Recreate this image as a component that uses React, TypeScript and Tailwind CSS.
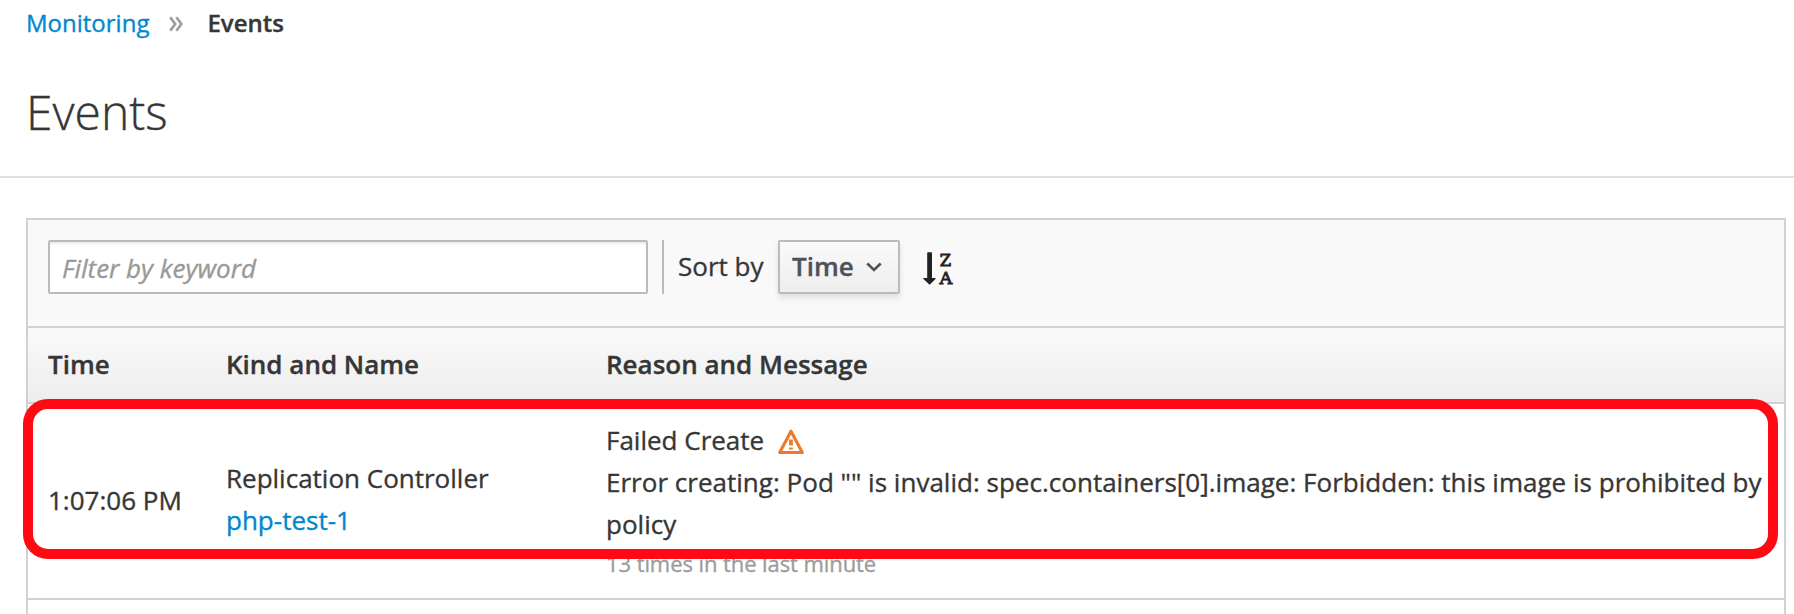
export default function App() {
  return (
    <div className="relative flex h-[614px] w-[1794px] flex-col overflow-hidden bg-white font-['Open_Sans',sans-serif] text-[26px] leading-[42px] text-[#363636] [-webkit-text-stroke:0.35px]">
      <header className="h-[178px] shrink-0 border-b-2 border-[#e1e1e1] pl-[26px] pt-[3px]">
        <nav className="flex items-center text-[24px] leading-[40px]">
          <a className="text-[#0088ce]">Monitoring</a>
          <svg className="ml-[20px] mr-[21px] mt-[2px] h-[16px] w-[14px]" viewBox="0 0 14 16" fill="none" stroke="#9c9c9c" strokeWidth="2.7">
            <path d="M1.2 1.2 6.2 8 1.2 14.8M7.4 1.2 12.4 8 7.4 14.8" />
          </svg>
          <span className="ml-[3px] font-semibold">Events</span>
        </nav>
        <h1 className="mt-[43px] text-[48px] font-light leading-[52px]">Events</h1>
      </header>

      <main className="ml-[26px] mt-[40px] flex h-[420px] w-[1760px] shrink-0 flex-col border-x-2 border-t-2 border-[#d1d1d1]">
        <div className="flex h-[108px] shrink-0 items-start border-b-2 border-[#d1d1d1] bg-[#f9f9f9] pl-[20px] pt-[20px]">
          <input
            className="h-[54px] w-[600px] rounded-[2px] border-2 border-[#bbb] bg-white px-[12px] pt-[2px] shadow-[inset_0_2px_2px_rgba(3,3,3,0.075)] outline-none placeholder:italic placeholder:text-[#999] placeholder:opacity-100"
            placeholder="Filter by keyword"
          />
          <div className="ml-[14px] h-[54px] w-[2px] bg-[#bbb]" />
          <span className="ml-[14px] w-[100px] pt-[5px]">Sort by</span>
          <button className="flex h-[54px] w-[122px] items-center rounded-[2px] border-2 border-[#bbb] bg-linear-to-b from-[#fafafa] to-[#ededed] pb-[2px] pl-[12px] font-semibold text-[#4d5258] shadow-[0_4px_6px_rgba(3,3,3,0.1)]">
            Time
            <svg className="ml-[12px] mt-[2px] h-[10px] w-[16px]" viewBox="0 0 16 10" fill="none" stroke="currentColor" strokeWidth="2.6">
              <path d="M1.3 1.5 8 8 14.7 1.5" />
            </svg>
          </button>
          <svg className="ml-[22px] mt-[10px] h-[40px] w-[40px] overflow-visible" viewBox="0 0 40 40" fill="#222">
            <path d="M5.2 3q0-.7.7-.7h3.4q.7 0 .7.7v24.9h3.2q.9.3.2 1.1L8.2 34.2q-.6.6-1.2 0L1.5 29q-.7-.8.2-1.1h3.5z" />
            <g className="font-['DejaVu_Serif',serif] text-[17.5px] font-normal [-webkit-text-stroke:0.9px_#222]" stroke="#222" strokeWidth="0.9">
              <text x="17.8" y="16" textLength="11.4" lengthAdjust="spacingAndGlyphs">Z</text>
              <text x="17.4" y="34.3" textLength="12.8" lengthAdjust="spacingAndGlyphs">A</text>
            </g>
          </svg>
        </div>

        <div className="grid h-[76px] shrink-0 grid-cols-[178px_380px_1fr] border-b-2 border-[#d1d1d1] bg-linear-to-b from-[#fafafa] to-[#ededed] pl-[20px] pt-[15px] font-semibold">
          <div>Time</div>
          <div>Kind and Name</div>
          <div>Reason and Message</div>
        </div>

        <div className="grid h-[196px] shrink-0 grid-cols-[178px_380px_1fr] border-b-2 border-[#d1d1d1] pl-[20px]">
          <div className="pt-[75px]">1:07:06 PM</div>
          <div className="pt-[53px]">
            <div>Replication Controller</div>
            <a className="text-[#0088ce]">php-test-1</a>
          </div>
          <div className="pt-[15px]">
            <div className="flex items-center">
              Failed Create
              <svg className="ml-[13px] mt-[4px] h-[26px] w-[28px]" viewBox="0 0 28 26" fill="none" stroke="#ec7a2c">
                <path d="M14 2.2 2.7 23.5h22.6z" strokeWidth="3.1" strokeLinejoin="round" />
                <path d="M14 10.5v6M14 18.5v2" strokeWidth="3.8" />
              </svg>
            </div>
            <div className="tracking-[0.015px]">Error creating: Pod "" is invalid: spec.containers[0].image: Forbidden: this image is prohibited by policy</div>
            <div className="text-[22px] leading-[36px] tracking-[-0.08px] text-[#9c9c9c]">13 times in the last minute</div>
          </div>
        </div>
      </main>

      <div className="pointer-events-none absolute left-[23px] top-[399px] h-[160px] w-[1755px] rounded-[25px] border-[10px] border-[#ff0a12]" />
    </div>
  );
}
